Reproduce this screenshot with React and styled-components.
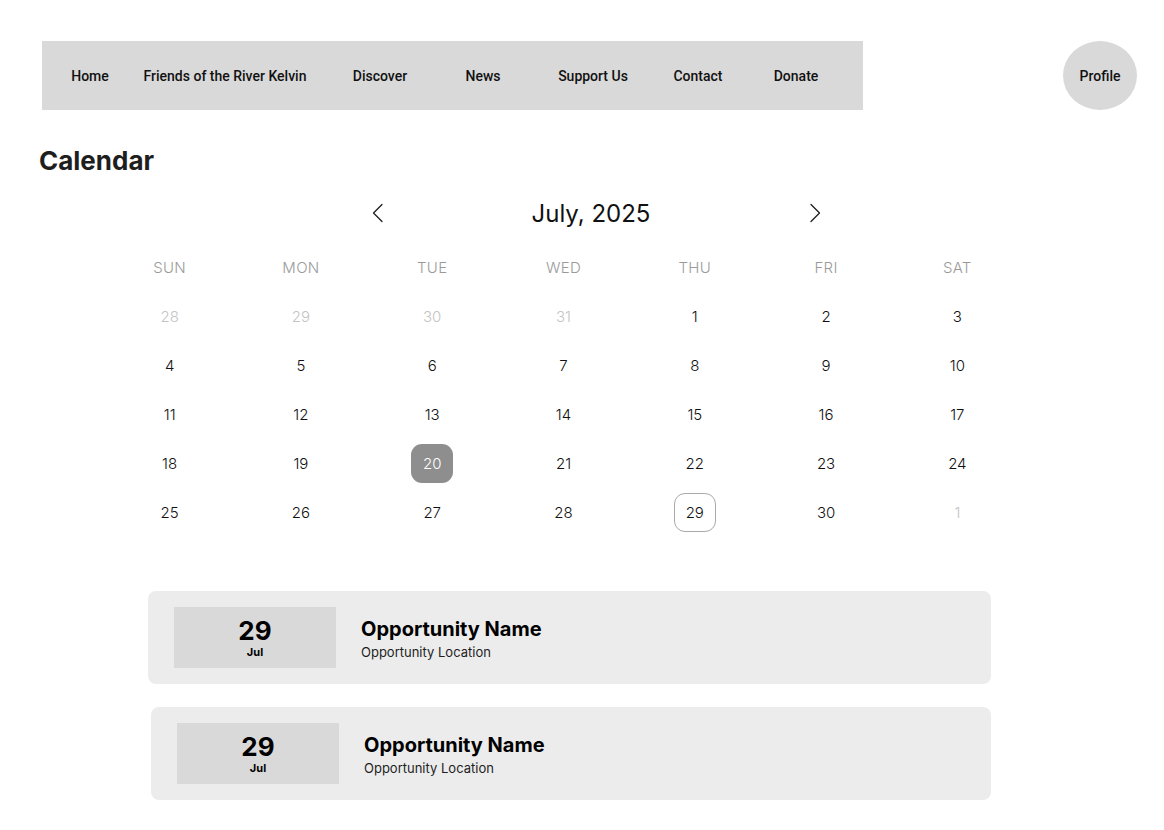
import React from "react";
import styled, { createGlobalStyle } from "styled-components";

const GlobalStyle = createGlobalStyle`
  body {
    margin: 0;
    background: #ffffff;
    font-family: "Inter", "Liberation Sans", sans-serif;
    color: #1e1e1e;
  }
`;

const Page = styled.div`
  width: 1164px;
  padding-top: 41px;
  padding-bottom: 30px;
`;

const TopRow = styled.div`
  display: flex;
  align-items: flex-start;
  justify-content: space-between;
  padding: 0 27px 0 42px;
`;

const NavBar = styled.nav`
  width: 821px;
  height: 69px;
  background: #d9d9d9;
  display: flex;
  align-items: center;
  padding-left: 8px;
  box-sizing: border-box;
`;

const NavItem = styled.a`
  width: ${(p) => p.w}px;
  text-align: center;
  font-family: "Roboto", "Liberation Sans", sans-serif;
  font-weight: 500;
  font-size: 14px;
  color: #111;
  text-decoration: none;
`;

const Profile = styled.div`
  width: 74px;
  height: 69px;
  border-radius: 50%;
  background: #d9d9d9;
  display: flex;
  align-items: center;
  justify-content: center;
  font-family: "Roboto", "Liberation Sans", sans-serif;
  font-weight: 500;
  font-size: 14px;
  color: #111;
`;

const Heading = styled.h1`
  margin: 36px 0 0 39px;
  font-size: 26px;
  font-weight: 700;
  line-height: 29px;
  color: #1e1e1e;
`;

const Calendar = styled.div`
  width: 919px;
  margin-left: 104px;
`;

const MonthHeader = styled.div`
  display: flex;
  align-items: center;
  width: 457px;
  margin: 20px 0 0 264px;
  height: 36px;
`;

const ArrowButton = styled.button`
  width: 20px;
  height: 24px;
  border: none;
  background: none;
  padding: 0;
  display: flex;
  align-items: center;
  justify-content: center;
  cursor: pointer;
`;

const MonthTitle = styled.div`
  flex: 1;
  text-align: center;
  padding-right: 11px;
  font-size: 24px;
  font-weight: 400;
  color: #111;
`;

const Grid = styled.div`
  display: grid;
  grid-template-columns: repeat(7, 1fr);
  grid-auto-rows: 49px;
  margin-top: 12px;
`;

const WeekDay = styled.div`
  display: flex;
  align-items: center;
  justify-content: center;
  font-size: 15px;
  font-weight: 300;
  color: #9a9a9a;
  letter-spacing: 0.3px;
`;

const Cell = styled.div`
  display: flex;
  align-items: center;
  justify-content: center;
`;

const Day = styled.div`
  width: 42px;
  height: 39px;
  box-sizing: border-box;
  border-radius: 11px;
  display: flex;
  align-items: center;
  justify-content: center;
  font-size: 15px;
  font-weight: 300;
  color: ${(p) => (p.selected ? "#ffffff" : p.muted ? "#c4c4c4" : "#111")};
  background: ${(p) => (p.selected ? "#8e8e8e" : "transparent")};
  border: 1px solid ${(p) => (p.today ? "#a9a9a9" : "transparent")};
`;

const Events = styled.div`
  margin: 54px 0 0 148px;
  width: 843px;
  display: flex;
  flex-direction: column;
  gap: 23px;
`;

const EventCard = styled.div`
  margin-left: ${(p) => p.offset || 0}px;
  height: 93px;
  background: #ececec;
  border-radius: 8px;
  display: flex;
  align-items: center;
  padding-left: 26px;
  box-sizing: border-box;
`;

const DateBox = styled.div`
  width: 162px;
  height: 61px;
  background: #d9d9d9;
  display: flex;
  flex-direction: column;
  align-items: center;
  justify-content: center;
  gap: 3px;
  padding-top: 2px;
  box-sizing: border-box;
  color: #000;
`;

const DateNum = styled.div`
  font-size: 26px;
  font-weight: 700;
  line-height: 24px;
`;

const DateMonth = styled.div`
  font-size: 11px;
  font-weight: 700;
  line-height: 13px;
`;

const EventInfo = styled.div`
  margin-left: 25px;
  display: flex;
  flex-direction: column;
  gap: 3px;
  margin-top: 2px;
`;

const EventName = styled.div`
  font-size: 20px;
  font-weight: 700;
  color: #000;
`;

const EventLocation = styled.div`
  font-size: 13px;
  font-weight: 400;
  color: #1e1e1e;
`;

const Chevron = ({ dir }) => (
  <svg width="12" height="20" viewBox="0 0 12 20">
    <polyline
      points={dir === "left" ? "10,1.5 1.5,10 10,18.5" : "2,1.5 10.5,10 2,18.5"}
      fill="none"
      stroke="#1e1e1e"
      strokeWidth="1.3"
      strokeLinecap="round"
      strokeLinejoin="round"
    />
  </svg>
);

const navItems = [
  ["Home", 80],
  ["Friends of the River Kelvin", 190],
  ["Discover", 120],
  ["News", 86],
  ["Support Us", 134],
  ["Contact", 76],
  ["Donate", 120],
];

const weekDays = ["SUN", "MON", "TUE", "WED", "THU", "FRI", "SAT"];

const days = [
  [28, true], [29, true], [30, true], [31, true], [1], [2], [3],
  [4], [5], [6], [7], [8], [9], [10],
  [11], [12], [13], [14], [15], [16], [17],
  [18], [19], [20], [21], [22], [23], [24],
  [25], [26], [27], [28], [29], [30], [1, true],
];

const events = [
  { day: 29, month: "Jul", name: "Opportunity Name", location: "Opportunity Location", offset: 0 },
  { day: 29, month: "Jul", name: "Opportunity Name", location: "Opportunity Location", offset: 3 },
];

export default function App() {
  return (
    <Page>
      <GlobalStyle />
      <TopRow>
        <NavBar>
          {navItems.map(([label, w]) => (
            <NavItem key={label} w={w} href="#">
              {label}
            </NavItem>
          ))}
        </NavBar>
        <Profile>Profile</Profile>
      </TopRow>

      <Heading>Calendar</Heading>

      <Calendar>
        <MonthHeader>
          <ArrowButton>
            <Chevron dir="left" />
          </ArrowButton>
          <MonthTitle>July, 2025</MonthTitle>
          <ArrowButton>
            <Chevron dir="right" />
          </ArrowButton>
        </MonthHeader>

        <Grid>
          {weekDays.map((d) => (
            <WeekDay key={d}>{d}</WeekDay>
          ))}
          {days.map(([n, muted], i) => (
            <Cell key={i}>
              <Day muted={muted} selected={!muted && n === 20} today={!muted && n === 29}>
                {n}
              </Day>
            </Cell>
          ))}
        </Grid>
      </Calendar>

      <Events>
        {events.map((e, i) => (
          <EventCard key={i} offset={e.offset}>
            <DateBox>
              <DateNum>{e.day}</DateNum>
              <DateMonth>{e.month}</DateMonth>
            </DateBox>
            <EventInfo>
              <EventName>{e.name}</EventName>
              <EventLocation>{e.location}</EventLocation>
            </EventInfo>
          </EventCard>
        ))}
      </Events>
    </Page>
  );
}
